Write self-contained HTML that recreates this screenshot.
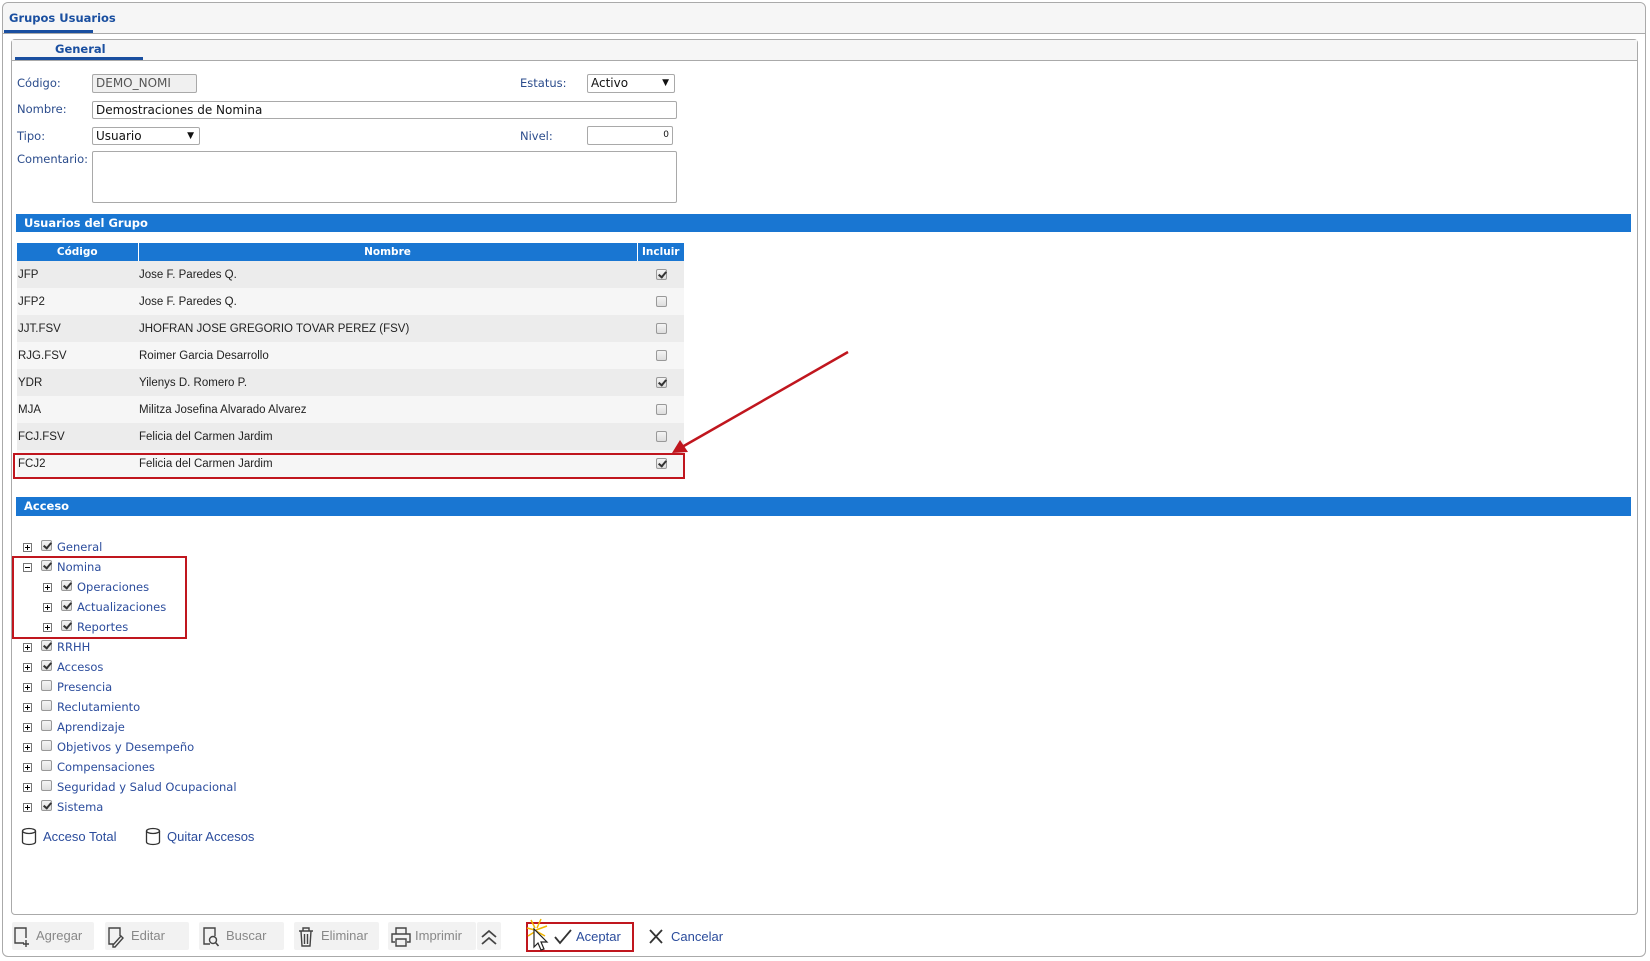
<!DOCTYPE html>
<html><head><meta charset="utf-8"><style>
*{box-sizing:border-box;margin:0;padding:0}
body{width:1650px;height:961px;background:#fff;position:relative;overflow:hidden;font-family:"DejaVu Sans","Liberation Sans",sans-serif;font-size:11.5px;color:#222}
.a{position:absolute}
.lbl{position:absolute;color:#2b4c8c;font-size:11.5px}
.inp{position:absolute;border:1px solid #a9a9a9;border-radius:2px;background:#fff;font-size:12px;padding:1px 3px;line-height:15px;color:#111}
.bar{position:absolute;left:16px;width:1615px;background:#1976d2;color:#fff;font-weight:bold;font-size:11.5px;padding-left:8px}
table{position:absolute;left:17px;top:243px;width:667px;border-collapse:collapse;font-family:"Liberation Sans",sans-serif;font-size:11.5px}
th{background:#1976d2;color:#fff;font-family:"DejaVu Sans",sans-serif;font-size:10.5px;height:18px;border-right:1px solid #fff}
td{height:27px;padding-left:1px;color:#222}
tr.g td{background:#ececec}tr.w td{background:#f6f6f6}
.cb{display:inline-block;width:11px;height:11px;border:1px solid #999;border-radius:2px;background:linear-gradient(#f4f4f4,#ddd);position:relative;vertical-align:middle}
.cb.a{position:absolute}
.cb.c::after{content:"";position:absolute;left:3px;top:0px;width:3px;height:6px;border:solid #333;border-width:0 2px 2px 0;transform:rotate(40deg)}
.ex{position:absolute;width:9px;height:9px;border:1px solid #777;background:#fff}
.ex::before{content:"";position:absolute;left:1px;top:3px;width:5px;height:1px;background:#000}
.ex.p::after{content:"";position:absolute;left:3px;top:1px;width:1px;height:5px;background:#000}
.tr{position:absolute;color:#2b4c9c;font-size:11.5px}
.btn{position:absolute;top:922px;height:28px;background:#f2f2f2;border-radius:2px;color:#888;font-family:"Liberation Sans",sans-serif;font-size:13px;line-height:28px}
</style></head><body>
<div class="a" style="left:2px;top:2px;width:1644px;height:955px;border:1px solid #aaa;border-radius:6px;background:#fff"></div>
<div class="a" style="left:3px;top:3px;width:1642px;height:31px;background:#f6f6f6;border-bottom:1px solid #aaa;border-radius:6px 6px 0 0"></div>
<div class="a" style="left:9px;top:11px;font-weight:bold;color:#1a4fa0;font-size:11.5px">Grupos Usuarios</div>
<div class="a" style="left:4px;top:30px;width:89px;height:3px;background:#1a4fa0"></div>
<div class="a" style="left:11px;top:39px;width:1627px;height:876px;border:1px solid #aaa;border-radius:4px"></div>
<div class="a" style="left:12px;top:40px;width:1625px;height:21px;background:#f6f6f6;border-bottom:1px solid #aaa"></div>
<div class="a" style="left:55px;top:42px;font-weight:bold;color:#1a4fa0;font-size:11.5px">General</div>
<div class="a" style="left:15px;top:57px;width:128px;height:3px;background:#1a4fa0"></div>

<div class="lbl" style="left:17px;top:76px">Código:</div>
<div class="inp" style="left:92px;top:74px;width:105px;height:19px;background:#f0f0f0;color:#555">DEMO_NOMI</div>
<div class="lbl" style="left:520px;top:76px">Estatus:</div>
<div class="inp" style="left:587px;top:74px;width:88px;height:19px">Activo<span style="position:absolute;right:5px;font-size:9px">▼</span></div>
<div class="lbl" style="left:17px;top:102px">Nombre:</div>
<div class="inp" style="left:92px;top:101px;width:585px;height:18px">Demostraciones de Nomina</div>
<div class="lbl" style="left:17px;top:129px">Tipo:</div>
<div class="inp" style="left:92px;top:127px;width:108px;height:18px">Usuario<span style="position:absolute;right:5px;font-size:9px">▼</span></div>
<div class="lbl" style="left:520px;top:129px">Nivel:</div>
<div class="inp" style="left:587px;top:126px;width:86px;height:19px;text-align:right;font-size:9px">0</div>
<div class="lbl" style="left:17px;top:152px">Comentario:</div>
<div class="inp" style="left:92px;top:151px;width:585px;height:52px"></div>

<div class="bar" style="top:214px;height:18px;line-height:18px">Usuarios del Grupo</div>
<table>
<tr><th style="width:121px">Código</th><th style="width:499px">Nombre</th><th style="width:47px;border-right:0">Incluir</th></tr>
<tr class="g"><td>JFP</td><td>Jose F. Paredes Q.</td><td style="text-align:center"><span class="cb c"></span></td></tr>
<tr class="w"><td>JFP2</td><td>Jose F. Paredes Q.</td><td style="text-align:center"><span class="cb"></span></td></tr>
<tr class="g"><td>JJT.FSV</td><td>JHOFRAN JOSE GREGORIO TOVAR PEREZ (FSV)</td><td style="text-align:center"><span class="cb"></span></td></tr>
<tr class="w"><td>RJG.FSV</td><td>Roimer Garcia Desarrollo</td><td style="text-align:center"><span class="cb"></span></td></tr>
<tr class="g"><td>YDR</td><td>Yilenys D. Romero P.</td><td style="text-align:center"><span class="cb c"></span></td></tr>
<tr class="w"><td>MJA</td><td>Militza Josefina Alvarado Alvarez</td><td style="text-align:center"><span class="cb"></span></td></tr>
<tr class="g"><td>FCJ.FSV</td><td>Felicia del Carmen Jardim</td><td style="text-align:center"><span class="cb"></span></td></tr>
<tr class="w"><td>FCJ2</td><td>Felicia del Carmen Jardim</td><td style="text-align:center"><span class="cb c"></span></td></tr>
</table>
<div class="a" style="left:13px;top:453px;width:672px;height:26px;border:2px solid #c0161e"></div>
<svg class="a" style="left:0;top:0" width="1650" height="961"><line x1="848" y1="352" x2="682" y2="447" stroke="#c0161e" stroke-width="2.5"/><polygon points="672,453 680,440 688,452" fill="#c0161e"/></svg>

<div class="bar" style="top:497px;height:19px;line-height:19px">Acceso</div>

<div class="ex p" style="left:23px;top:543px"></div><span class="cb c a" style="left:41px;top:540px"></span><div class="tr" style="left:57px;top:540px">General</div>
<div class="ex" style="left:23px;top:563px"></div><span class="cb c a" style="left:41px;top:560px"></span><div class="tr" style="left:57px;top:560px">Nomina</div>
<div class="ex p" style="left:43px;top:583px"></div><span class="cb c a" style="left:61px;top:580px"></span><div class="tr" style="left:77px;top:580px">Operaciones</div>
<div class="ex p" style="left:43px;top:603px"></div><span class="cb c a" style="left:61px;top:600px"></span><div class="tr" style="left:77px;top:600px">Actualizaciones</div>
<div class="ex p" style="left:43px;top:623px"></div><span class="cb c a" style="left:61px;top:620px"></span><div class="tr" style="left:77px;top:620px">Reportes</div>
<div class="ex p" style="left:23px;top:643px"></div><span class="cb c a" style="left:41px;top:640px"></span><div class="tr" style="left:57px;top:640px">RRHH</div>
<div class="ex p" style="left:23px;top:663px"></div><span class="cb c a" style="left:41px;top:660px"></span><div class="tr" style="left:57px;top:660px">Accesos</div>
<div class="ex p" style="left:23px;top:683px"></div><span class="cb a" style="left:41px;top:680px"></span><div class="tr" style="left:57px;top:680px">Presencia</div>
<div class="ex p" style="left:23px;top:703px"></div><span class="cb a" style="left:41px;top:700px"></span><div class="tr" style="left:57px;top:700px">Reclutamiento</div>
<div class="ex p" style="left:23px;top:723px"></div><span class="cb a" style="left:41px;top:720px"></span><div class="tr" style="left:57px;top:720px">Aprendizaje</div>
<div class="ex p" style="left:23px;top:743px"></div><span class="cb a" style="left:41px;top:740px"></span><div class="tr" style="left:57px;top:740px">Objetivos y Desempeño</div>
<div class="ex p" style="left:23px;top:763px"></div><span class="cb a" style="left:41px;top:760px"></span><div class="tr" style="left:57px;top:760px">Compensaciones</div>
<div class="ex p" style="left:23px;top:783px"></div><span class="cb a" style="left:41px;top:780px"></span><div class="tr" style="left:57px;top:780px">Seguridad y Salud Ocupacional</div>
<div class="ex p" style="left:23px;top:803px"></div><span class="cb c a" style="left:41px;top:800px"></span><div class="tr" style="left:57px;top:800px">Sistema</div>
<div class="a" style="left:12px;top:556px;width:175px;height:83px;border:2px solid #c0161e"></div>

<svg class="a" style="left:21px;top:827px" width="16" height="19"><ellipse cx="8" cy="4" rx="6.5" ry="2.5" fill="none" stroke="#333" stroke-width="1.3"/><path d="M1.5 4v11c0 1.5 3 2.5 6.5 2.5s6.5-1 6.5-2.5V4" fill="none" stroke="#333" stroke-width="1.3"/></svg>
<div class="a" style="left:43px;top:829px;color:#2b4c9c;font-family:'Liberation Sans',sans-serif;font-size:13px">Acceso Total</div>
<svg class="a" style="left:145px;top:827px" width="16" height="19"><ellipse cx="8" cy="4" rx="6.5" ry="2.5" fill="none" stroke="#333" stroke-width="1.3"/><path d="M1.5 4v11c0 1.5 3 2.5 6.5 2.5s6.5-1 6.5-2.5V4" fill="none" stroke="#333" stroke-width="1.3"/></svg>
<div class="a" style="left:167px;top:829px;color:#2b4c9c;font-family:'Liberation Sans',sans-serif;font-size:13px">Quitar Accesos</div>

<div class="btn" style="left:12px;width:82px;padding-left:24px">Agregar</div>
<svg class="a" style="left:13px;top:926px" width="18" height="22"><path d="M11 17H2V2h11v10M13 14v7M10 18h6" fill="none" stroke="#444" stroke-width="1.4"/></svg>
<div class="btn" style="left:105px;width:84px;padding-left:26px">Editar</div>
<svg class="a" style="left:107px;top:926px" width="18" height="22"><path d="M7 18H2V2h11v8M6 19l8-9 2 2-8 9H6z" fill="none" stroke="#444" stroke-width="1.4"/></svg>
<div class="btn" style="left:199px;width:85px;padding-left:27px">Buscar</div>
<svg class="a" style="left:202px;top:926px" width="18" height="22"><path d="M8 18H2V2h11v8" fill="none" stroke="#444" stroke-width="1.4"/><circle cx="11" cy="14" r="3.5" fill="none" stroke="#444" stroke-width="1.4"/><path d="M13.5 16.5l3 3.5" stroke="#444" stroke-width="1.6"/></svg>
<div class="btn" style="left:294px;width:85px;padding-left:27px">Eliminar</div>
<svg class="a" style="left:297px;top:926px" width="18" height="22"><path d="M2 5h14M6 5V2h6v3M4 5l1 15h8l1-15M7.5 8v10M10.5 8v10" fill="none" stroke="#444" stroke-width="1.4"/></svg>
<div class="btn" style="left:388px;width:88px;padding-left:27px">Imprimir</div>
<svg class="a" style="left:391px;top:926px" width="20" height="22"><path d="M5 8V2h10v6M4 16H1V8h18v8h-3M5 13h10v7H5z" fill="none" stroke="#444" stroke-width="1.4"/></svg>
<div class="btn" style="left:477px;width:24px;background:#f2f2f2"></div>
<svg class="a" style="left:479px;top:927px" width="20" height="20"><path d="M3 10l7-6 7 6M3 17l7-6 7 6" fill="none" stroke="#444" stroke-width="1.8"/></svg>

<div class="a" style="left:526px;top:922px;width:108px;height:30px;border:2px solid #c0161e"></div>
<svg class="a" style="left:525px;top:918px" width="30" height="40"><path d="M6 2l4 8M16 1l-4 9M2 10l8 2M22 8l-11 4M3 18l8-5M20 18l-9-5" stroke="#f0b400" stroke-width="1.5"/><path d="M9 11v18l4-4 3 7 3-1-3-7h6z" fill="#fff" stroke="#222" stroke-width="1.2"/></svg>
<svg class="a" style="left:553px;top:928px" width="20" height="18"><path d="M2 9l5 6L18 2" fill="none" stroke="#333" stroke-width="1.8"/></svg>
<div class="a" style="left:576px;top:929px;color:#2b4c9c;font-family:'Liberation Sans',sans-serif;font-size:13px">Aceptar</div>
<svg class="a" style="left:648px;top:928px" width="16" height="17"><path d="M2 2l12 13M14 2L2 15" stroke="#333" stroke-width="1.8"/></svg>
<div class="a" style="left:671px;top:929px;color:#2b4c9c;font-family:'Liberation Sans',sans-serif;font-size:13px">Cancelar</div>
</body></html>
